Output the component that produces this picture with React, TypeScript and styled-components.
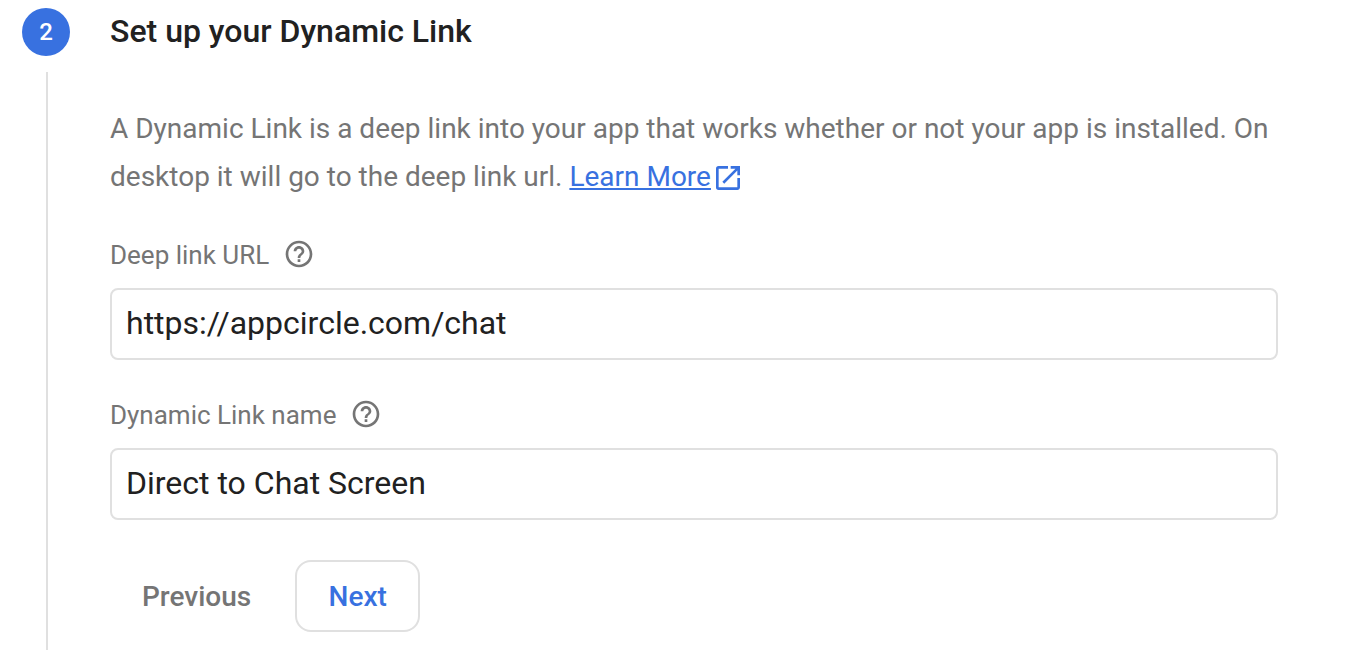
import React, { useState } from "react";
import styled, { createGlobalStyle } from "styled-components";
import { MdHelpOutline, MdOpenInNew } from "react-icons/md";

const colors = {
  blue: "#3871e0",
  text: "#212121",
  muted: "#757575",
  line: "#e0e0e0",
};

const GlobalStyle = createGlobalStyle`
  *, *::before, *::after { box-sizing: border-box; }
  body {
    margin: 0;
    background: #fff;
    color: ${colors.text};
    font-family: Roboto, "Liberation Sans", sans-serif;
  }
  input, button { font-family: inherit; }
`;

const Step = styled.section`
  display: flex;
  gap: 40px;
  min-height: 100vh;
  padding: 8px 70px 0 22px;
`;

const Rail = styled.div`
  display: flex;
  flex-direction: column;
  align-items: center;
  flex: none;
  gap: 16px;
  width: 48px;
`;

const StepNumber = styled.span`
  display: grid;
  place-items: center;
  width: 48px;
  height: 48px;
  border-radius: 50%;
  background: ${colors.blue};
  color: #fff;
  font-size: 24px;
  font-weight: 500;
`;

const RailLine = styled.div`
  flex: 1;
  margin-left: 2px;
  width: 2px;
  background: ${colors.line};
`;

const Content = styled.div`
  flex: 1;
  min-width: 0;
`;

const Title = styled.h2`
  margin: 0 0 51px;
  font-size: 32px;
  font-weight: 500;
  line-height: 46px;
`;

const Description = styled.p`
  margin: 0 0 37px;
  color: ${colors.muted};
  font-size: 28px;
  line-height: 48px;
`;

const LearnMore = styled.a`
  color: ${colors.blue};
  text-decoration: underline;
  white-space: nowrap;

  svg {
    margin-left: 1px;
    vertical-align: -8px;
  }
`;

const Field = styled.div`
  margin-bottom: 38px;
`;

const LabelRow = styled.div`
  display: flex;
  align-items: flex-start;
  gap: 14px;
  height: 32px;
  margin-bottom: 18px;
`;

const Label = styled.label`
  color: ${colors.muted};
  font-size: 26px;
  line-height: 34px;
`;

const HelpButton = styled.button`
  display: flex;
  padding: 0;
  border: 0;
  background: none;
  color: ${colors.muted};
  cursor: pointer;
`;

const TextInput = styled.input`
  display: block;
  width: 100%;
  height: 72px;
  padding: 0 14px 2px;
  border: 2px solid ${colors.line};
  border-radius: 8px;
  background: #fff;
  color: ${colors.text};
  font-size: 32px;
`;

const Actions = styled.div`
  display: flex;
  gap: 12px;
  padding-top: 2px;
`;

const ActionButton = styled.button<{ $primary?: boolean }>`
  min-width: 125px;
  height: 72px;
  padding: 0 30px;
  border: 2px solid ${(p) => (p.$primary ? colors.line : "transparent")};
  border-radius: 16px;
  background: none;
  color: ${(p) => (p.$primary ? colors.blue : colors.muted)};
  font-size: 28px;
  font-weight: 500;
  cursor: pointer;
`;

function TextField(props: {
  id: string;
  label: string;
  value: string;
  onChange: (value: string) => void;
}) {
  return (
    <Field>
      <LabelRow>
        <Label htmlFor={props.id}>{props.label}</Label>
        <HelpButton type="button" aria-label={`Help: ${props.label}`}>
          <MdHelpOutline size={32} />
        </HelpButton>
      </LabelRow>
      <TextInput
        id={props.id}
        type="text"
        value={props.value}
        onChange={(e) => props.onChange(e.target.value)}
      />
    </Field>
  );
}

export default function App() {
  const [url, setUrl] = useState("https://appcircle.com/chat");
  const [name, setName] = useState("Direct to Chat Screen");

  return (
    <>
      <GlobalStyle />
      <Step>
        <Rail>
          <StepNumber>2</StepNumber>
          <RailLine />
        </Rail>
        <Content>
          <Title>Set up your Dynamic Link</Title>
          <Description>
            A Dynamic Link is a deep link into your app that works whether or not your app is
            installed. On desktop it will go to the deep link url.{" "}
            <LearnMore href="#learn-more">
              Learn More
              <MdOpenInNew size={32} />
            </LearnMore>
          </Description>
          <TextField id="deep-link" label="Deep link URL" value={url} onChange={setUrl} />
          <TextField id="link-name" label="Dynamic Link name" value={name} onChange={setName} />
          <Actions>
            <ActionButton type="button">Previous</ActionButton>
            <ActionButton type="button" $primary>
              Next
            </ActionButton>
          </Actions>
        </Content>
      </Step>
    </>
  );
}
